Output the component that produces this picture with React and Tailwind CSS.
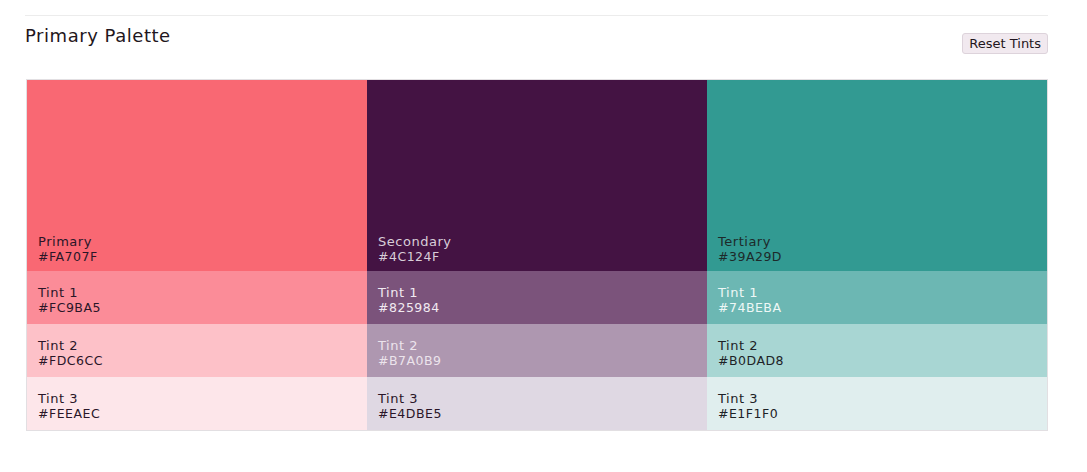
import React from "react";

const columns = [
  {
    name: "Primary",
    base: { hex: "#FA707F", bg: "bg-[#f96873]", text: "text-[#2a1628]" },
    tints: [
      { hex: "#FC9BA5", bg: "bg-[#fb8c98]", text: "text-[#2a1628]" },
      { hex: "#FDC6CC", bg: "bg-[#fdc1c8]", text: "text-[#2a1628]" },
      { hex: "#FEEAEC", bg: "bg-[#fde6ea]", text: "text-[#2a1628]" },
    ],
  },
  {
    name: "Secondary",
    base: { hex: "#4C124F", bg: "bg-[#441343]", text: "text-[#d8cdd8]" },
    tints: [
      { hex: "#825984", bg: "bg-[#7b537b]", text: "text-[#f1eaf1]" },
      { hex: "#B7A0B9", bg: "bg-[#ae97b0]", text: "text-[#ece4ec]" },
      { hex: "#E4DBE5", bg: "bg-[#dfd8e3]", text: "text-[#2a1628]" },
    ],
  },
  {
    name: "Tertiary",
    base: { hex: "#39A29D", bg: "bg-[#329a92]", text: "text-[#1d2a2a]" },
    tints: [
      { hex: "#74BEBA", bg: "bg-[#6cb7b3]", text: "text-[#eef7f6]" },
      { hex: "#B0DAD8", bg: "bg-[#a8d6d3]", text: "text-[#1d2226]" },
      { hex: "#E1F1F0", bg: "bg-[#e0eeee]", text: "text-[#1d2226]" },
    ],
  },
];

const Swatch = ({ label, hex, bg, text, big }) => (
  <div className={`${bg} ${text} flex flex-col justify-end px-[11px] ${big ? "h-[191px] pb-[7px]" : "h-[53px] pb-[9px]"}`}>
    <span className="text-[13px] leading-[15px] tracking-[0.04em]">{label}</span>
    <span className="text-[12.5px] leading-[15px] tracking-[0.04em]">{hex}</span>
  </div>
);

export default function App() {
  return (
    <div className="bg-white w-[1087px] h-[472px] pt-[15px] pl-[25px]" style={{ fontFamily: '"DejaVu Sans", "Noto Sans", sans-serif' }}>
      <div className="w-[1023px] border-t border-[#ececec] pt-[10px]">
        <div className="flex items-start justify-between">
          <h2 className="text-[18px] text-[#1f1620] leading-[20px] tracking-[0.03em]">Primary Palette</h2>
          <button className="mt-[7px] h-[21px] text-[13px] leading-[18px] px-[6px] bg-[#f1e9ef] border border-[#ddd3db] rounded-[3px] text-[#1f1620]">
            Reset Tints
          </button>
        </div>
        <div className="mt-[25px] grid grid-cols-3 border border-[#e2dfe2] ml-[1px]">
          {columns.map((c) => (
            <div key={c.name} className="flex flex-col">
              <Swatch big label={c.name} {...c.base} />
              {c.tints.map((t, i) => (
                <Swatch key={t.hex} label={`Tint ${i + 1}`} {...t} />
              ))}
            </div>
          ))}
        </div>
      </div>
    </div>
  );
}
